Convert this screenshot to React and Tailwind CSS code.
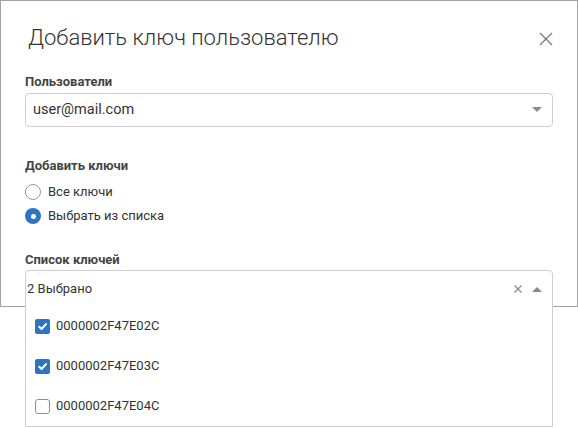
import React from "react";

const font = { fontFamily: "Roboto, 'Noto Sans', sans-serif" };

function Check() {
  return (
    <svg width="11" height="11" viewBox="0 0 10 10" fill="none">
      <path d="M2 5.2 L4.2 7.3 L8.2 2.8" stroke="white" strokeWidth="1.8" strokeLinecap="round" strokeLinejoin="round" />
    </svg>
  );
}

function Item({ checked, label }) {
  return (
    <div className="flex items-center h-[40px] pl-[9px] gap-[6px]">
      {checked ? (
        <span className="w-[15px] h-[15px] rounded-[2px] bg-[#2f74c0] flex items-center justify-center">
          <Check />
        </span>
      ) : (
        <span className="w-[15px] h-[15px] rounded-[3px] border border-[#8f8f8f] bg-white" />
      )}
      <span className="text-[13px] text-[#333]">{label}</span>
    </div>
  );
}

export default function App() {
  return (
    <div className="w-[578px] h-[428px] bg-white relative" style={font}>
      <div className="h-[307px] border border-[#a3a3a3] px-6">
        <div className="flex items-center justify-between pt-[23px] h-[51px]">
          <h1 className="ml-[3px] text-[22px] font-light text-[#333] leading-[26px]">Добавить ключ пользователю</h1>
          <svg width="14" height="14" viewBox="0 0 14 14" className="mt-[2px]">
            <path d="M1 1 L13 13 M13 1 L1 13" stroke="#7a7a7a" strokeWidth="1.3" />
          </svg>
        </div>
        <div className="mt-[22px] text-[13px] font-bold text-[#444] leading-[16px]">Пользователи</div>
        <div className="mt-[3px] h-[34px] border border-[#cfcfcf] rounded-[4px] flex items-center justify-between pl-[7px] pr-[10px]">
          <span className="text-[14.5px] text-[#333]">user@mail.com</span>
          <svg width="10" height="6" viewBox="0 0 10 6">
            <path d="M0 0 L10 0 L5 5 Z" fill="#8a8a8a" />
          </svg>
        </div>
        <div className="mt-[31px] text-[13px] font-bold text-[#444] leading-[16px]">Добавить ключи</div>
        <div className="mt-[6px] flex items-center h-[24px] gap-[7px]">
          <span className="w-[16px] h-[16px] rounded-full border border-[#9a9a9a] bg-white" />
          <span className="text-[13px] text-[#333]">Все ключи</span>
        </div>
        <div className="flex items-center h-[24px] gap-[7px]">
          <span className="w-[16px] h-[16px] rounded-full bg-[#2f74c0] flex items-center justify-center">
            <span className="w-[5px] h-[5px] rounded-full bg-white" />
          </span>
          <span className="text-[13px] text-[#333]">Выбрать из списка</span>
        </div>
        <div className="mt-[24px] text-[13px] font-bold text-[#444] leading-[16px]">Список ключей</div>
        <div className="mt-[2px] border border-[#cfcfcf] rounded-t-[4px] bg-white">
          <div className="h-[35px] flex items-center justify-between pl-[1px] pr-[10px]">
            <span className="text-[13px] text-[#333]">2 Выбрано</span>
            <div className="flex items-center gap-[10px]">
              <svg width="8" height="8" viewBox="0 0 8 8">
                <path d="M0.5 0.5 L7.5 7.5 M7.5 0.5 L0.5 7.5" stroke="#8a8a8a" strokeWidth="1.2" />
              </svg>
              <svg width="10" height="6" viewBox="0 0 10 6">
                <path d="M0 6 L10 6 L5 1 Z" fill="#8a8a8a" />
              </svg>
            </div>
          </div>
          <Item checked label="0000002F47E02C" />
          <Item checked label="0000002F47E03C" />
          <Item checked={false} label="0000002F47E04C" />
        </div>
      </div>
    </div>
  );
}
